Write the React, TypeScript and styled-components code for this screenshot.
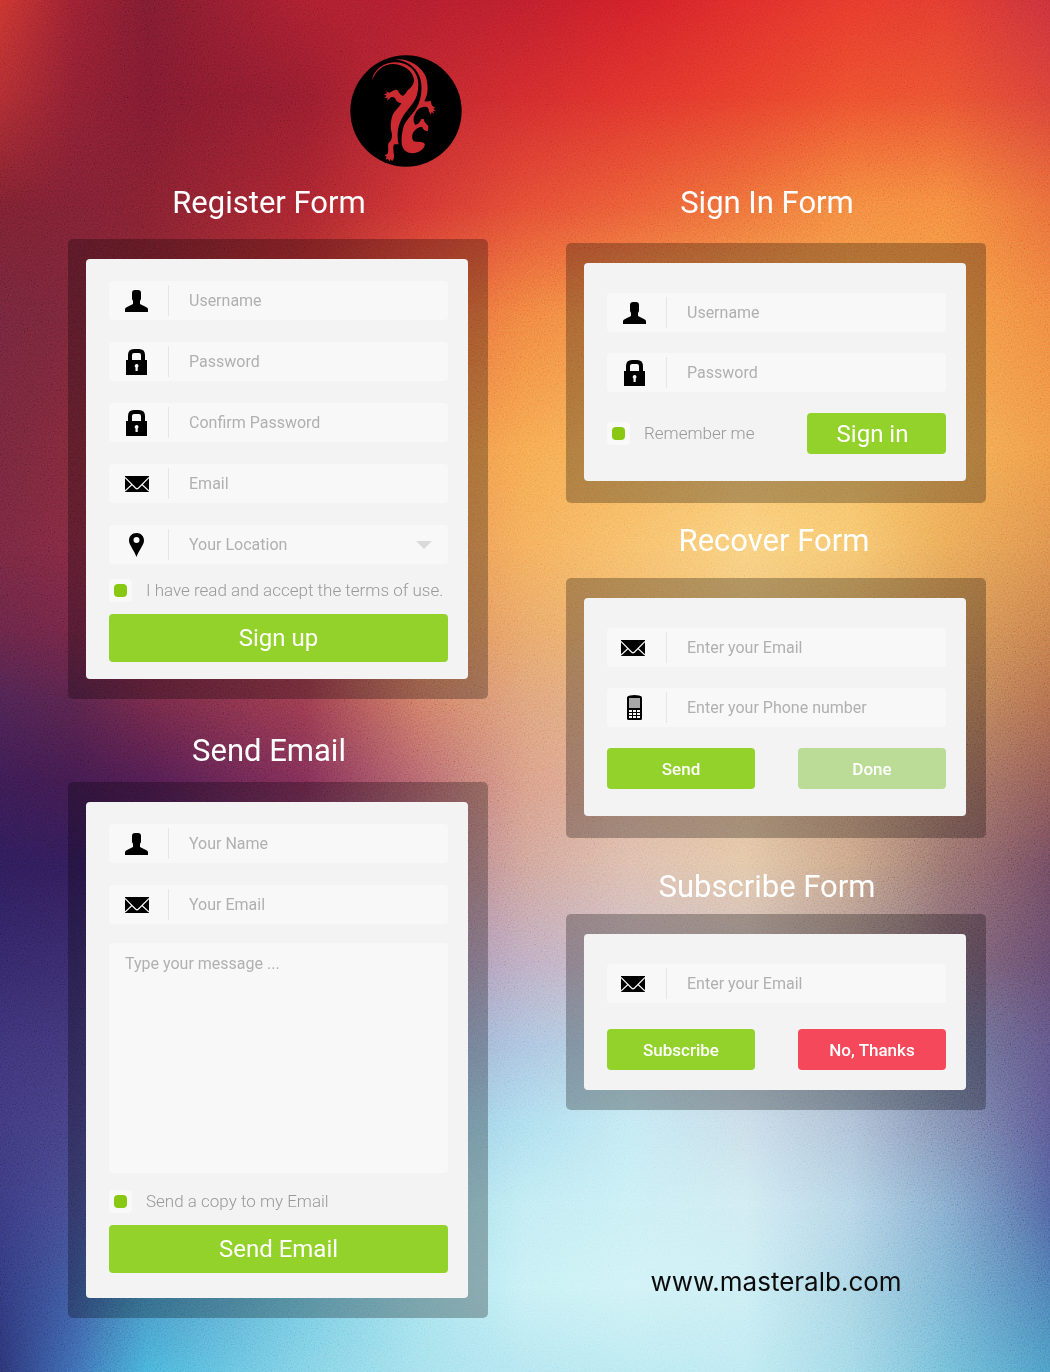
import React from "react";
import styled, { createGlobalStyle } from "styled-components";

const GlobalStyle = createGlobalStyle`
  *, *::before, *::after { box-sizing: border-box; }
  body { margin: 0; background: #2c3575; }
  body, button, input, select, textarea {
    font-family: Roboto, "Noto Sans", "Liberation Sans", sans-serif;
  }
`;

/* Colour mesh of the backdrop: one row of colours per height, both in percent. */
const meshColumns = [0, 7, 14, 29, 40, 50, 60, 71, 81, 90, 100];
const meshRows: { at: number; colors: string[] }[] = [
  { at: 0, colors: ["#c8332e", "#962030", "#7a1b2e", "#a81f2e", "#b01d2d", "#bb1e2b", "#cf1f28", "#de2c2a", "#e6382b", "#e23a2e", "#c8303a"] },
  { at: 7, colors: ["#ac2c30", "#8a1f31", "#7c1a2e", "#921c2d", "#bc262e", "#d02a2c", "#de312b", "#e63d2b", "#ec4c2d", "#e94f30", "#d84036"] },
  { at: 15, colors: ["#78202f", "#7a2032", "#80202f", "#a6242e", "#d03431", "#e34a33", "#ea5a35", "#ee6e39", "#f3863e", "#f4883e", "#e86a38"] },
  { at: 23, colors: ["#70253a", "#762538", "#822632", "#b63530", "#e6603a", "#f0823f", "#f4944a", "#f6a24e", "#f6a44c", "#f59d46", "#ef8640"] },
  { at: 33, colors: ["#73263b", "#7d2838", "#8a2a38", "#b84438", "#ec8a45", "#f6a74e", "#f7b45a", "#f8c068", "#f8bf62", "#f4ad54", "#ee9846"] },
  { at: 40, colors: ["#75273f", "#7e2840", "#862a3e", "#aa4040", "#e68a50", "#f4ac5a", "#f6bd68", "#f9cf7c", "#f6c66e", "#eaa856", "#dc8e4c"] },
  { at: 46, colors: ["#662545", "#702544", "#802840", "#a03c46", "#dd8454", "#e8a567", "#f0b66e", "#f0c27a", "#e6b26a", "#d8985a", "#c67c4a"] },
  { at: 51, colors: ["#4c2350", "#562349", "#702846", "#983a4c", "#cf7a64", "#dda078", "#e6b080", "#e6ba84", "#dca470", "#c48a60", "#b06c4c"] },
  { at: 57, colors: ["#3a1b50", "#401a4c", "#4e1c4e", "#7c2d54", "#b4646c", "#d89b84", "#e0b096", "#e2ba94", "#cc9c7c", "#aa7868", "#8e5a54"] },
  { at: 63, colors: ["#2d1c58", "#311c58", "#3a2060", "#72406a", "#a87084", "#cfa298", "#dcbcac", "#e2c6a6", "#c8a486", "#96706c", "#6f4a5e"] },
  { at: 70, colors: ["#332766", "#372a68", "#443874", "#7c6490", "#a088ac", "#bcaac0", "#ccbcc8", "#ccbabc", "#a89498", "#806878", "#644a6c"] },
  { at: 76, colors: ["#3c3274", "#3f3575", "#4a4684", "#7c84b0", "#96a4ca", "#a9c2de", "#b8d2e2", "#b4c4d2", "#98a4b8", "#707898", "#5f5484"] },
  { at: 82, colors: ["#3e387a", "#443f80", "#4c5492", "#7ca2c6", "#94c4de", "#abdeef", "#c2eaf3", "#c8dde9", "#acc0d6", "#808fb2", "#5a5892"] },
  { at: 88, colors: ["#38397c", "#454a8e", "#4c6aa8", "#7cb8d8", "#a0dcea", "#c0ecf3", "#c8eff5", "#cfebf3", "#b4d4e6", "#82aacd", "#50629f"] },
  { at: 94, colors: ["#30387a", "#3d579c", "#4890c2", "#72c8e2", "#a4e2ee", "#c6f0f5", "#cef2f6", "#caeef4", "#a8d4e4", "#78b2d2", "#4c7cb2"] },
  { at: 100, colors: ["#2a3270", "#3c68b0", "#46b0d8", "#7ed0e4", "#a2e0ec", "#b2e5f0", "#b8e9f0", "#bce9f1", "#a0d8e6", "#70bcd6", "#4a9ac4"] },
];

const Page = styled.div`
  display: grid;
  grid-template-columns: minmax(0, 1fr);
  min-height: 100vh;
`;

const Backdrop = styled.div`
  grid-area: 1 / 1;
  display: grid;
  overflow: hidden;
`;

const Band = styled.div<{ $colors: string[]; $from: number; $to: number }>`
  grid-area: 1 / 1;
  background: linear-gradient(
    to right,
    ${(p) => p.$colors.map((c, i) => `${c} ${meshColumns[i]}%`).join(", ")}
  );
  mask-image: linear-gradient(
    to bottom,
    ${(p) => (p.$to === 0 ? "#000 0%" : `transparent ${p.$from}%`)},
    #000 ${(p) => p.$to}%
  );
`;

const Grain = styled.svg`
  grid-area: 1 / 1;
  width: 100%;
  height: 100%;
  min-height: 0;
  opacity: 0.2;
  mix-blend-mode: overlay;
`;

const Content = styled.div`
  grid-area: 1 / 1;
  z-index: 1;
  padding: 55px 64px 54px 68px;
`;

const Header = styled.header`
  display: flex;
  padding-left: 282px;
  margin-bottom: 16px;
  @media (max-width: 760px) {
    padding-left: 0;
    justify-content: center;
  }
`;

const Columns = styled.main`
  display: grid;
  grid-template-columns: repeat(2, minmax(0, 1fr));
  column-gap: 78px;
  @media (max-width: 900px) {
    column-gap: 24px;
  }
  @media (max-width: 760px) {
    grid-template-columns: minmax(0, 1fr);
    row-gap: 32px;
  }
`;

const Column = styled.div`
  display: flex;
  flex-direction: column;
`;

const Section = styled.section<{ $before?: number; $gap: number }>`
  display: flex;
  flex-direction: column;
  gap: ${(p) => p.$gap}px;
  margin-top: ${(p) => p.$before ?? 0}px;
`;

const Title = styled.h2<{ $inset?: number }>`
  margin: 0;
  padding-right: ${(p) => p.$inset ?? 18}px;
  color: #fff;
  font-size: 31px;
  line-height: 40px;
  font-weight: 400;
  text-align: center;
`;

const Panel = styled.div<{ $bottom?: number }>`
  padding: 20px 20px ${(p) => p.$bottom ?? 20}px 18px;
  border-radius: 5px;
  background: rgba(0, 0, 0, 0.27);
`;

const Card = styled.form<{ $top: number; $bottom: number }>`
  display: flex;
  flex-direction: column;
  padding: ${(p) => p.$top}px 20px ${(p) => p.$bottom}px 23px;
  border-radius: 4px;
  background: #f3f3f3;
`;

const Fields = styled.div<{ $gap: number }>`
  display: flex;
  flex-direction: column;
  gap: ${(p) => p.$gap}px;
`;

const FieldBox = styled.label`
  display: flex;
  align-items: center;
  height: 39px;
  border-radius: 4px;
  background: #f8f8f8;
`;

const IconSlot = styled.span<{ $shift: number }>`
  display: flex;
  flex: none;
  align-items: center;
  justify-content: center;
  width: 60px;
  height: 31px;
  padding-right: ${(p) => p.$shift}px;
  border-right: 1px solid #e6e6e6;
`;

const TextInput = styled.input`
  flex: 1;
  min-width: 0;
  height: 39px;
  padding: 0 16px 0 20px;
  border: 0;
  outline: 0;
  background: transparent;
  color: #777;
  font-size: 16px;
  font-weight: 400;
  &::placeholder {
    color: #b0b0b0;
    opacity: 1;
  }
`;

const Picker = styled.select`
  flex: 1;
  min-width: 0;
  height: 39px;
  padding: 0 0 0 20px;
  border: 0;
  outline: 0;
  appearance: none;
  background: transparent;
  color: #b0b0b0;
  font-size: 16px;
  font-weight: 400;
`;

const Caret = styled.svg`
  flex: none;
  margin-right: 16px;
`;

const Message = styled.textarea`
  display: block;
  width: 100%;
  height: 230px;
  padding: 10px 16px;
  border: 0;
  border-radius: 4px;
  outline: 0;
  resize: none;
  background: #f8f8f8;
  color: #777;
  font-size: 16px;
  line-height: 22px;
  font-weight: 400;
  &::placeholder {
    color: #b0b0b0;
    opacity: 1;
  }
`;

const CheckLabel = styled.label`
  display: flex;
  align-items: center;
  gap: 14px;
  color: #999;
  font-size: 17px;
  line-height: 23px;
  font-weight: 300;
  white-space: nowrap;
`;

const CheckBox = styled.input`
  display: grid;
  flex: none;
  place-content: center;
  width: 23px;
  height: 23px;
  margin: 0;
  appearance: none;
  border-radius: 4px;
  background: #f9f9f9;
  &:checked::before {
    content: "";
    width: 13px;
    height: 13px;
    border-radius: 4px;
    background: #88c813;
  }
`;

const tones = { green: "#93d22b", pale: "#bbdc97", red: "#f5485b" };

const Button = styled.button<{ $tone?: keyof typeof tones; $size?: "large" | "medium" | "small" }>`
  width: ${(p) => (p.$size === "medium" ? "139px" : "100%")};
  height: ${(p) => (p.$size === "large" ? 48 : 41)}px;
  padding: ${(p) => (p.$size === "medium" ? "0 8px 0 0" : "0")};
  border: 0;
  border-radius: 4px;
  background: ${(p) => tones[p.$tone ?? "green"]};
  color: #fff;
  font-size: ${(p) => (p.$size === "small" ? 17 : 24)}px;
  font-weight: ${(p) => (p.$size === "small" ? 500 : 400)};
  cursor: pointer;
`;

const ButtonPair = styled.div`
  display: grid;
  grid-template-columns: repeat(2, minmax(0, 1fr));
  gap: 43px;
`;

const CheckAndButton = styled.div`
  display: flex;
  align-items: center;
  justify-content: space-between;
`;

const Stack = styled.div<{ $before: number }>`
  margin-top: ${(p) => p.$before}px;
`;

const Footer = styled.footer`
  padding-top: 156px;
  text-align: center;
`;

const SiteLink = styled.a`
  color: #0b0b0b;
  font-family: Inter, Lato, sans-serif;
  font-size: 26px;
  line-height: 32px;
  text-decoration: none;
`;

const Logo = () => (
  <svg width="112" height="112" viewBox="30 29 336 336" role="img" aria-label="Lizard logo">
    <circle cx="198" cy="197" r="167" fill="#000" />
    <g fill="#cb2b30">
      <path d="M96 104 C100 75 130 52 162 51 C200 50 228 72 234 105 C238 140 228 165 210 185 C190 208 175 232 173 262 C172 278 174 290 176 297 L163 297 C158 302 160 312 161 322 C164 334 162 342 156 348 L152 341 L148 348 L144 340 L137 343 L140 334 L134 330 L143 325 C147 315 142 300 146 293 C155 285 158 275 155 262 C150 245 152 215 163 200 C172 190 180 182 184 174 C176 172 168 168 165 158 C158 152 150 155 149 160 L141 165 L143 157 L133 158 L140 151 L131 147 L142 144 L136 137 L148 142 C156 140 162 130 172 134 C177 140 182 152 190 151 C196 146 200 140 203 135 C212 128 222 118 222 104 C220 80 196 58 160 56 C130 56 108 76 96 104Z" />
      <path d="M165 42 C205 38 244 62 258 95 C266 125 264 150 253 167 C260 170 266 168 272 166 L275 178 C278 184 284 184 286 187 L280 190 L288 198 L279 196 L282 206 L275 200 L272 208 L267 198 C266 188 262 184 256 184 C245 184 232 190 227 203 C220 215 218 225 225 238 C235 238 240 230 244 220 L252 222 C250 230 262 236 265 244 L264 256 C258 258 250 256 247 246 C240 243 232 248 226 254 C216 262 214 275 220 287 C232 292 245 286 254 295 C256 305 245 318 225 323 C205 326 192 318 187 303 C182 285 186 260 192 240 C200 222 215 210 228 190 C242 168 246 140 244 115 C240 80 215 48 165 42Z" />
    </g>
  </svg>
);

const UserIcon = () => (
  <svg width="23" height="22" viewBox="0 0 23 22" aria-hidden="true">
    <path d="M7 3 Q7 0 10 0 H13 Q16 0 16 3 V9 L15 11 V14 L21 17 Q23 18 23 19 V22 H0 V19 Q0 18 2 17 L8 14 V11 L7 9Z" />
  </svg>
);

const LockIcon = () => (
  <svg width="21" height="26" viewBox="0 0 21 26" aria-hidden="true">
    <path d="M4 12 V6 Q4 2 8 2 H13 Q17 2 17 6 V12" fill="none" stroke="#000" strokeWidth="4" />
    <rect y="11" width="21" height="15" />
    <path d="M10.500 15 a2 2 0 0 1 1.200 3.600 V22 H9.500 V18.600 A2 2 0 0 1 10.500 15Z" fill="#f8f8f8" />
  </svg>
);

const MailIcon = () => (
  <svg width="24" height="16" viewBox="0 0 24 16" aria-hidden="true">
    <rect width="24" height="16" />
    <path d="M0 1.500 L10.500 12 Q12 13.500 13.500 12 L24 1.500 M0 15 L7 8.500 M24 15 L17 8.500" fill="none" stroke="#f8f8f8" strokeWidth="1.200" />
  </svg>
);

const PinIcon = () => (
  <svg width="15" height="24" viewBox="0 0 15 24" aria-hidden="true">
    <path fillRule="evenodd" d="M7.500 0 C12 0 15 3.300 15 7.500 C15 12 10 17 7.500 24 C5 17 0 12 0 7.500 C0 3.300 3 0 7.500 0Z M7.500 4 A3 3 0 1 0 7.500 10 A3 3 0 1 0 7.500 4Z" />
  </svg>
);

const PhoneIcon = () => (
  <svg width="15" height="25" viewBox="0 0 15 25" aria-hidden="true">
    <path d="M0 2.500 Q0 1 3 0.500 Q7.500 -0.300 12 0.500 Q15 1 15 2.500 V23.500 Q15 25 13.500 25 H1.500 Q0 25 0 23.500Z" />
    <rect x="2" y="3" width="11" height="10" fill="#a8a8a8" />
    <path d="M2 15h3v2H2z M6 15h3v2H6z M10 15h3v2h-3z M2 18h3v2H2z M6 18h3v2H6z M10 18h3v2h-3z M2 21h3v2H2z M6 21h3v2H6z M10 21h3v2h-3z" fill="#f8f8f8" />
  </svg>
);

const icons = { user: UserIcon, lock: LockIcon, mail: MailIcon, pin: PinIcon, phone: PhoneIcon };

function Field(props: { icon: keyof typeof icons; text: string; type?: string; shift?: number }) {
  const Icon = icons[props.icon];
  return (
    <FieldBox>
      <IconSlot $shift={props.shift ?? 4}>
        <Icon />
      </IconSlot>
      <TextInput type={props.type ?? "text"} placeholder={props.text} aria-label={props.text} />
    </FieldBox>
  );
}

function LocationField() {
  return (
    <FieldBox>
      <IconSlot $shift={4}>
        <PinIcon />
      </IconSlot>
      <Picker aria-label="Your Location" defaultValue="">
        <option value="">Your Location</option>
      </Picker>
      <Caret width="16" height="8" viewBox="0 0 16 8" aria-hidden="true">
        <path d="M0 0H16L8 8Z" fill="#dadada" />
      </Caret>
    </FieldBox>
  );
}

function Check({ text }: { text: string }) {
  return (
    <CheckLabel>
      <CheckBox type="checkbox" defaultChecked />
      {text}
    </CheckLabel>
  );
}

export default function App() {
  return (
    <Page>
      <GlobalStyle />
      <Backdrop aria-hidden="true">
        {meshRows.map((row, i) => (
          <Band key={row.at} $colors={row.colors} $from={i ? meshRows[i - 1].at : 0} $to={row.at} />
        ))}
        <Grain>
          <filter id="grain">
            <feTurbulence type="fractalNoise" baseFrequency="0.7" numOctaves="2" />
            <feColorMatrix values="1.500 0 0 0 -0.250  1.500 0 0 0 -0.250  1.500 0 0 0 -0.250  0 0 0 0 1" />
          </filter>
          <rect width="100%" height="100%" filter="url(#grain)" />
        </Grain>
      </Backdrop>
      <Content>
        <Header>
          <Logo />
        </Header>
        <Columns>
          <Column>
            <Section $gap={16}>
              <Title>Register Form</Title>
              <Panel>
                <Card $top={22} $bottom={17}>
                  <Fields $gap={22}>
                    <Field icon="user" text="Username" />
                    <Field icon="lock" text="Password" type="password" />
                    <Field icon="lock" text="Confirm Password" type="password" />
                    <Field icon="mail" text="Email" type="email" />
                    <LocationField />
                  </Fields>
                  <Stack $before={15}>
                    <Check text="I have read and accept the terms of use." />
                  </Stack>
                  <Stack $before={12}>
                    <Button type="button" $size="large">Sign up</Button>
                  </Stack>
                </Card>
              </Panel>
            </Section>
            <Section $before={32} $gap={11}>
              <Title>Send Email</Title>
              <Panel>
                <Card $top={22} $bottom={25}>
                  <Fields $gap={22}>
                    <Field icon="user" text="Your Name" />
                    <Field icon="mail" text="Your Email" type="email" />
                  </Fields>
                  <Stack $before={19}>
                    <Message placeholder="Type your message ..." aria-label="Type your message" />
                  </Stack>
                  <Stack $before={17}>
                    <Check text="Send a copy to my Email" />
                  </Stack>
                  <Stack $before={12}>
                    <Button type="button" $size="large">Send Email</Button>
                  </Stack>
                </Card>
              </Panel>
            </Section>
          </Column>
          <Column>
            <Section $gap={20}>
              <Title>Sign In Form</Title>
              <Panel $bottom={22}>
                <Card $top={30} $bottom={27}>
                  <Fields $gap={21}>
                    <Field icon="user" text="Username" />
                    <Field icon="lock" text="Password" type="password" />
                    <CheckAndButton>
                      <Check text="Remember me" />
                      <Button type="button" $size="medium">Sign in</Button>
                    </CheckAndButton>
                  </Fields>
                </Card>
              </Panel>
            </Section>
            <Section $before={18} $gap={17}>
              <Title $inset={4}>Recover Form</Title>
              <Panel $bottom={22}>
                <Card $top={30} $bottom={27}>
                  <Fields $gap={21}>
                    <Field icon="mail" text="Enter your Email" type="email" shift={8} />
                    <Field icon="phone" text="Enter your Phone number" type="tel" shift={4} />
                    <ButtonPair>
                      <Button type="button" $size="small">Send</Button>
                      <Button type="button" $size="small" $tone="pale">Done</Button>
                    </ButtonPair>
                  </Fields>
                </Card>
              </Panel>
            </Section>
            <Section $before={29} $gap={7}>
              <Title>Subscribe Form</Title>
              <Panel>
                <Card $top={30} $bottom={20}>
                  <Fields $gap={26}>
                    <Field icon="mail" text="Enter your Email" type="email" shift={8} />
                    <ButtonPair>
                      <Button type="button" $size="small">Subscribe</Button>
                      <Button type="button" $size="small" $tone="red">No, Thanks</Button>
                    </ButtonPair>
                  </Fields>
                </Card>
              </Panel>
            </Section>
            <Footer>
              <SiteLink href="#masteralb">www.masteralb.com</SiteLink>
            </Footer>
          </Column>
        </Columns>
      </Content>
    </Page>
  );
}
